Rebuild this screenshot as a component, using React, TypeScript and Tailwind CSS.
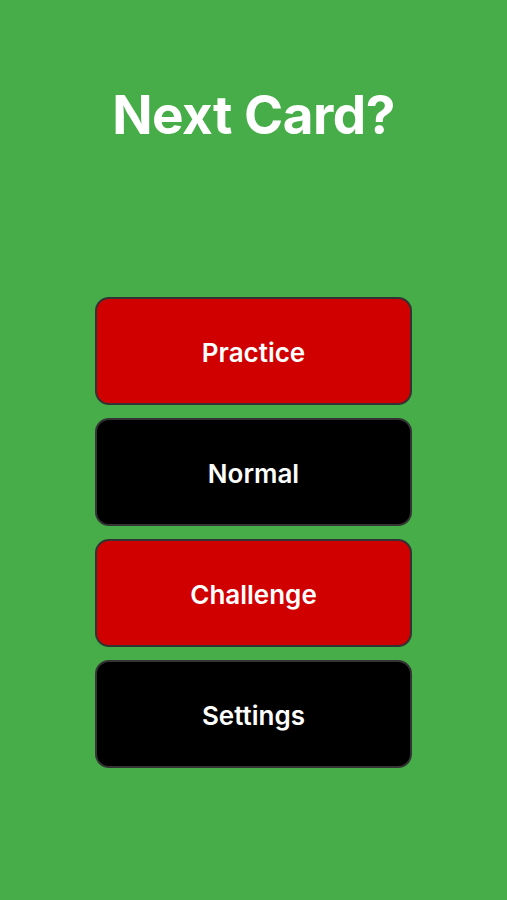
import React from 'react';

const modes = [
  { label: 'Practice', color: 'bg-[#d10000]' },
  { label: 'Normal', color: 'bg-black' },
  { label: 'Challenge', color: 'bg-[#d10000]' },
  { label: 'Settings', color: 'bg-black' },
];

export default function App() {
  return (
    <div
      className="h-[900px] w-full bg-[#46ad48] flex flex-col items-center"
      style={{ fontFamily: 'Inter, "Noto Sans", sans-serif' }}
    >
      <h1 className="mt-[83px] text-[53px] leading-[64px] font-bold text-white tracking-[-0.5px]">
        Next Card?
      </h1>

      <div className="mt-[150px] flex flex-col gap-[13px]">
        {modes.map(m => (
          <button
            key={m.label}
            className={`w-[317px] h-[108px] rounded-[14px] border-2 border-[#333333] ${m.color} text-white text-[26px] font-semibold flex items-center justify-center pt-[3px]`}
          >
            {m.label}
          </button>
        ))}
      </div>
    </div>
  );
}
